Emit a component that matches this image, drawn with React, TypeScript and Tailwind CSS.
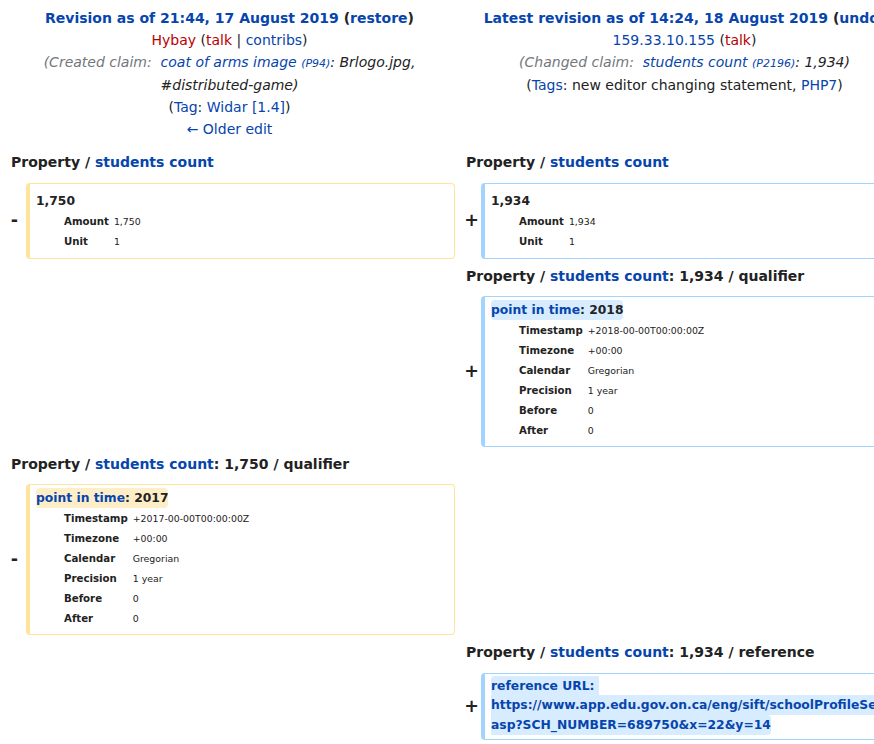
import React from 'react';

type Row = [string, string];

const Details = ({ rows }: { rows: Row[] }) => (
  <div className="ml-[28px] grid grid-cols-[auto_1fr] gap-x-[5px] py-[1px]">
    {rows.map(([k, v]) => (
      <React.Fragment key={k}>
        <div className="font-bold text-[10.2px] leading-[20px]">{k}</div>
        <div className="text-[9.4px] leading-[20px]">{v}</div>
      </React.Fragment>
    ))}
  </div>
);

// left-hand markers sit a little further from the box than the right-hand ones
const Minus = () => (
  <div className="self-center pr-[4px] text-right font-bold text-[17.5px] leading-[21px] text-[#222]">-</div>
);

const Plus = () => (
  <div className="self-center -mr-[2px] text-right font-bold text-[17.5px] leading-[21px] text-[#222]">+</div>
);

const LineNo = ({ children }: { children?: React.ReactNode }) => (
  <div className="col-span-2 pl-[7px] pt-[2px] pb-[5px] font-bold text-[14px] leading-[22.4px] text-[#222]">
    {children}
  </div>
);

const Prop = ({ tail }: { tail?: string }) => (
  <>
    Property / <span className="text-[#0645ad]">students count</span>
    {tail}
  </>
);

const timeRows = (year: string): Row[] => [
  ['Timestamp', `+${year}-00-00T00:00:00Z`],
  ['Timezone', '+00:00'],
  ['Calendar', 'Gregorian'],
  ['Precision', '1 year'],
  ['Before', '0'],
  ['After', '0'],
];

export default function App() {
  return (
    <div className="w-[874px] h-[744px] overflow-hidden bg-white font-['DejaVu_Sans',sans-serif] text-[#222]">
      <div className="w-[914px] pl-[4px] pt-[4px] grid grid-cols-[18px_429px_18px_429px] gap-[4px]">
        {/* titles */}
        <div className="col-span-2 pt-[3px] pb-[5px] text-center text-[14px] leading-[22.2px]">
          <div className="font-bold">
            <span className="text-[#0645ad]">Revision as of 21:44, 17 August 2019</span> (
            <span className="text-[#0645ad]">restore</span>)
          </div>
          <div>
            <span className="text-[#ba0000]">Hybay</span> (<span className="text-[#ba0000]">talk</span> |{' '}
            <span className="text-[#0645ad]">contribs</span>)
          </div>
          <div className="italic">
            <span className="text-[#72777d]">(Created claim:{'\u00a0'} </span>
            <span className="text-[#0645ad]">coat of arms image</span>{' '}
            <span className="text-[#0645ad] text-[11px] leading-none">(P94)</span>: Brlogo.jpg, #distributed-game)
          </div>
          <div>
            (<span className="text-[#0645ad]">Tag</span>: <span className="text-[#0645ad]">Widar [1.4]</span>)
          </div>
          <div className="text-[#0645ad]">← Older edit</div>
        </div>
        <div className="col-span-2 pt-[3px] pb-[5px] text-center text-[14px] leading-[22.2px] whitespace-nowrap">
          <div className="font-bold">
            <span className="text-[#0645ad]">Latest revision as of 14:24, 18 August 2019</span> (
            <span className="text-[#0645ad]">undo</span>)
          </div>
          <div>
            <span className="text-[#0645ad]">159.33.10.155</span> (<span className="text-[#ba0000]">talk</span>)
          </div>
          <div className="italic">
            <span className="text-[#72777d]">(Changed claim:{'\u00a0'} </span>
            <span className="text-[#0645ad]">students count</span>{' '}
            <span className="text-[#0645ad] text-[11px] leading-none">(P2196)</span>: 1,934)
          </div>
          <div>
            (<span className="text-[#0645ad]">Tags</span>: new editor changing statement,{' '}
            <span className="text-[#0645ad]">PHP7</span>)
          </div>
        </div>

        {/* main value */}
        <LineNo>
          <Prop />
        </LineNo>
        <LineNo>
          <Prop />
        </LineNo>
        <Minus />
        <div className="rounded-[4px] border border-l-4 border-[#ffe49c] px-[6px] pt-[7px] pb-[5px] text-[12.32px] leading-[20px]">
          <div className="font-bold">1,750</div>
          <Details rows={[['Amount', '1,750'], ['Unit', '1']]} />
        </div>
        <Plus />
        <div className="rounded-[4px] border border-l-4 border-[#a3d3ff] px-[6px] pt-[7px] pb-[5px] text-[12.32px] leading-[20px]">
          <div className="font-bold">1,934</div>
          <Details rows={[['Amount', '1,934'], ['Unit', '1']]} />
        </div>

        {/* added qualifier */}
        <LineNo />
        <LineNo>
          <Prop tail=": 1,934 / qualifier" />
        </LineNo>
        <div className="col-span-2" />
        <Plus />
        <div className="rounded-[4px] border border-l-4 border-[#a3d3ff] px-[6px] pt-[3px] pb-[4px] text-[12.32px] leading-[20px]">
          <div className="font-bold">
            <span className="rounded-[4px] bg-[#d8ecff] py-[3px]">
              <span className="text-[#0645ad]">point in time</span>: 2018
            </span>
          </div>
          <Details rows={timeRows('2018')} />
        </div>

        {/* removed qualifier */}
        <LineNo>
          <Prop tail=": 1,750 / qualifier" />
        </LineNo>
        <LineNo />
        <Minus />
        <div className="rounded-[4px] border border-l-4 border-[#ffe49c] px-[6px] pt-[3px] pb-[4px] text-[12.32px] leading-[20px]">
          <div className="font-bold">
            <span className="rounded-[4px] bg-[#feeec8] py-[3px]">
              <span className="text-[#0645ad]">point in time</span>: 2017
            </span>
          </div>
          <Details rows={timeRows('2017')} />
        </div>
        <div className="col-span-2" />

        {/* added reference */}
        <LineNo />
        <LineNo>
          <Prop tail=": 1,934 / reference" />
        </LineNo>
        <div className="col-span-2" />
        <Plus />
        <div className="rounded-[4px] border border-l-4 border-[#a3d3ff] px-[6px] pt-[3px] pb-[4px] text-[12.32px] leading-[19.5px] whitespace-nowrap">
          <div className="font-bold text-[#0645ad]">
            <span className="rounded-[4px] bg-[#d8ecff] py-[3px]">
              reference URL:{'\u00a0'}
              <br />
              https://www.app.edu.gov.on.ca/eng/sift/schoolProfileSec.
              <br />
              asp?SCH_NUMBER=689750&amp;x=22&amp;y=14
            </span>
          </div>
        </div>
      </div>
    </div>
  );
}
